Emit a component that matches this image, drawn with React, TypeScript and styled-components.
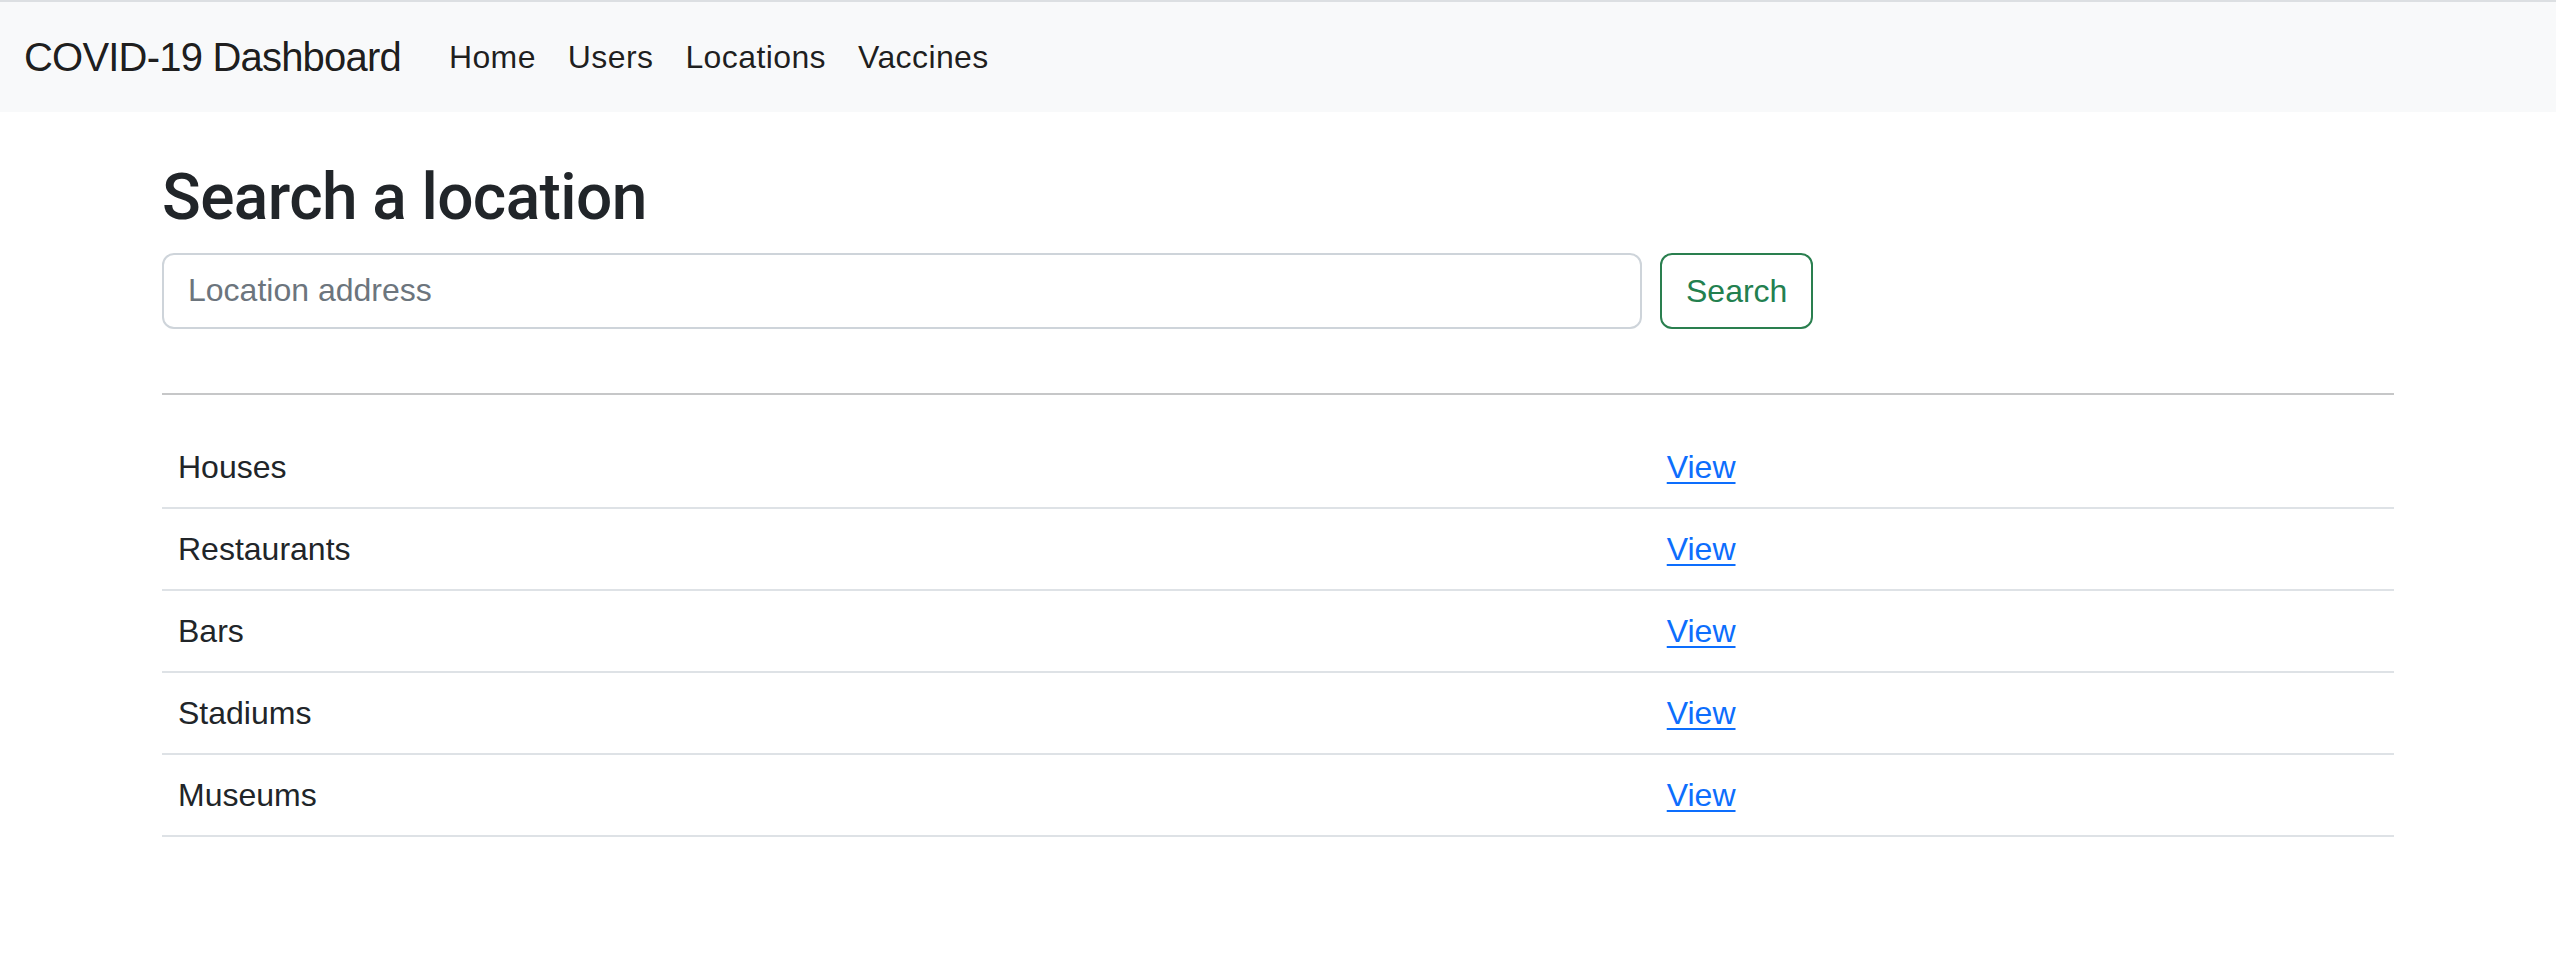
import React from "react";
import styled, { createGlobalStyle } from "styled-components";

const GlobalStyle = createGlobalStyle`
  * { box-sizing: border-box; }
  html, body { margin: 0; padding: 0; background: #ffffff; }
  body {
    font-family: "Liberation Sans", Arial, sans-serif;
    color: #212529;
    font-size: 32px;
    line-height: 1.5;
  }
`;

const Navbar = styled.nav`
  display: flex;
  align-items: center;
  height: 112px;
  border-top: 2px solid #dcdfe2;
  background: #f8f9fa;
  padding: 0 24px;
`;

const Brand = styled.a`
  font-size: 40px;
  line-height: 60px;
  letter-spacing: -0.8px;
  color: rgba(0, 0, 0, 0.9);
  text-decoration: none;
  margin-right: 32px;
  white-space: nowrap;
`;

const NavList = styled.ul`
  display: flex;
  list-style: none;
  margin: 0;
  padding: 0;
`;

const NavLink = styled.a`
  display: block;
  padding: 16px;
  font-size: 32px;
  line-height: 48px;
  letter-spacing: 0.4px;
  color: rgba(0, 0, 0, 0.88);
  text-decoration: none;
`;

const Container = styled.main`
  width: 2280px;
  margin: 0 auto;
  padding: 0 24px;
`;

const Heading = styled.h2`
  margin: 48px 0 16px;
  font-family: Roboto, "Liberation Sans", Arial, sans-serif;
  font-size: 64px;
  font-weight: 500;
  line-height: 1.2;
  letter-spacing: -0.6px;
  color: #212529;
`;

const SearchForm = styled.form`
  display: flex;
  align-items: stretch;
  gap: 18px;
`;

const Input = styled.input`
  width: 1480px;
  height: 76px;
  padding: 12px 24px;
  font-family: inherit;
  font-size: 32px;
  line-height: 48px;
  color: #212529;
  border: 2px solid #ced4da;
  border-radius: 12px;
  background: #fff;
  outline: none;
  &::placeholder { color: #6c757d; }
`;

const Button = styled.button`
  height: 76px;
  padding: 12px 24px;
  font-family: inherit;
  font-size: 32px;
  line-height: 48px;
  color: #23804f;
  background: transparent;
  border: 2px solid #2a7f4f;
  border-radius: 12px;
`;

const Divider = styled.hr`
  margin: 64px 0 32px;
  border: 0;
  border-top: 2px solid #c6c7c8;
`;

const Table = styled.table`
  width: 100%;
  border-collapse: collapse;
`;

const Row = styled.tr`
  border-bottom: 2px solid #dee2e6;
`;

const Cell = styled.td<{ $wide?: boolean }>`
  padding: 16px;
  font-size: 32px;
  line-height: 48px;
  color: #212529;
  width: ${(p) => (p.$wide ? "66.7%" : "auto")};
`;

const ViewLink = styled.a`
  color: #0d6efd;
  text-decoration: underline;
  text-decoration-thickness: 2px;
  text-underline-offset: 4px;
`;

const navItems = ["Home", "Users", "Locations", "Vaccines"];
const locations = ["Houses", "Restaurants", "Bars", "Stadiums", "Museums"];

export default function App() {
  return (
    <>
      <GlobalStyle />
      <Navbar>
        <Brand href="#">COVID-19 Dashboard</Brand>
        <NavList>
          {navItems.map((item) => (
            <li key={item}>
              <NavLink href="#">{item}</NavLink>
            </li>
          ))}
        </NavList>
      </Navbar>
      <Container>
        <Heading>Search a location</Heading>
        <SearchForm onSubmit={(e) => e.preventDefault()}>
          <Input placeholder="Location address" />
          <Button type="submit">Search</Button>
        </SearchForm>
        <Divider />
        <Table>
          <tbody>
            {locations.map((loc) => (
              <Row key={loc}>
                <Cell $wide>{loc}</Cell>
                <Cell>
                  <ViewLink href="#">View</ViewLink>
                </Cell>
              </Row>
            ))}
          </tbody>
        </Table>
      </Container>
    </>
  );
}
